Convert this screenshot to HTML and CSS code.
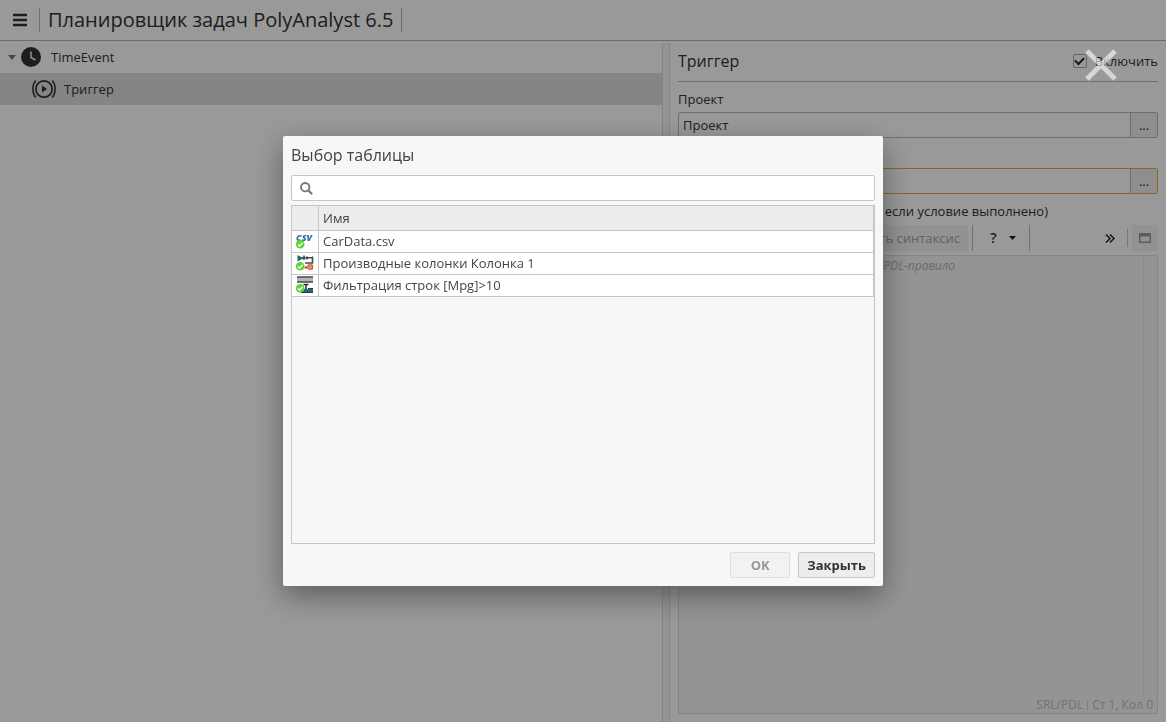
FILE: index.html
```html
<!DOCTYPE html>
<html lang="ru">
<head>
<meta charset="utf-8">
<title>Планировщик задач PolyAnalyst 6.5</title>
<link rel="stylesheet" href="styles.css">
</head>
<body>
<div class="app">
  <header class="topbar">
    <button class="menu" aria-label="Меню"><svg width="16" height="14" viewBox="0 0 16 14"><path d="M1 2h14M1 7h14M1 12h14" stroke="#333" stroke-width="2.4"/></svg></button>
    <h1 class="title">Планировщик задач PolyAnalyst 6.5</h1>
  </header>
  <div class="columns">
    <nav class="tree">
      <div class="node">
        <svg class="twist" width="8" height="5" viewBox="0 0 8 5"><path d="M0 0h8L4 5z" fill="#777"/></svg>
        <svg width="20" height="20" viewBox="0 0 20 20"><circle cx="10" cy="10" r="10" fill="#333"/><path d="M10 4.500V10.500L14.500 13" fill="none" stroke="#f5f5f5" stroke-width="1.500"/></svg>
        <span class="node-name">TimeEvent</span>
      </div>
      <div class="node child">
        <svg width="24" height="20" viewBox="0 0 24 20"><g fill="none" stroke="#333"><circle cx="12" cy="10" r="8.200" stroke-width="1.800"/><path d="M3.600 1.500C0 6 0 14 3.600 18.500M20.400 1.500C24 6 24 14 20.400 18.500" stroke-width="1.500"/></g><path d="M10 6.500v7l5-3.500z" fill="#333"/></svg>
        <span class="node-name">Триггер</span>
      </div>
    </nav>
    <div class="splitter"></div>
    <section class="panel">
      <div class="panel-head">
        <h2 class="panel-title">Триггер</h2>
        <label class="enable"><input type="checkbox" class="check" checked>Включить</label>
      </div>
      <label class="label" for="project">Проект</label>
      <div class="picker">
        <input id="project" class="field" value="Проект">
        <button class="more">...</button>
      </div>
      <label class="label" for="table">Таблица</label>
      <div class="picker invalid">
        <input id="table" class="field">
        <button class="more">...</button>
      </div>
      <label class="label condition" for="rule">если условие выполнено)</label>
      <div class="toolbar">
        <button class="tool syntax" disabled>Проверить синтаксис</button>
        <button class="tool help">? <svg width="7" height="4" viewBox="0 0 7 4"><path d="M0 0h7L3.500 4z" fill="#222"/></svg></button>
        <button class="tool expand" aria-label="Ещё"><svg width="10" height="9" viewBox="0 0 10 9"><path d="M1 .5l4 4-4 4M5 .5l4 4-4 4" fill="none" stroke="#222" stroke-width="1.500"/></svg></button>
        <span class="bar"></span>
        <button class="tool window" aria-label="Окно"><svg width="12" height="10" viewBox="0 0 12 10"><path d="M.75.75h10.500v8.500H.75z" fill="none" stroke="#999" stroke-width="1.500"/><path d="M0 0h12v3.500H0z" fill="#999"/></svg></button>
      </div>
      <div class="editor">
        <div class="editor-main">
          <textarea id="rule" class="code" placeholder="SRL/PDL-правило"></textarea>
          <div class="ruler"></div>
        </div>
        <div class="status"><span>SRL/PDL</span><span class="tick"></span><span>Ст 1, Кол 0</span></div>
      </div>
    </section>
  </div>
</div>
<div class="overlay">
  <button class="dismiss" aria-label="Закрыть окно"><svg width="32" height="32" viewBox="0 0 32 32"><path d="M2 2l28 28M30 2L2 30" stroke="#fff" stroke-opacity=".6" stroke-width="5"/></svg></button>
  <div class="dialog" role="dialog" aria-labelledby="dialog-title">
    <h2 class="dialog-title" id="dialog-title">Выбор таблицы</h2>
    <label class="search">
      <svg width="13" height="13" viewBox="0 0 13 13"><circle cx="5.200" cy="5.200" r="4.200" fill="none" stroke="#777" stroke-width="1.900"/><path d="M8.500 8.500L11.500 11.500" stroke="#777" stroke-width="2.200" stroke-linecap="round"/></svg>
      <input class="search-input" type="text" aria-label="Поиск">
    </label>
    <div class="list">
      <table class="grid">
        <thead><tr><th class="icon-cell"></th><th>Имя</th></tr></thead>
        <tbody>
          <tr><td class="icon-cell"><svg width="18" height="17" viewBox="0 0 18 17"><text x="0" y="9" class="csv">CSV</text><circle cx="4.200" cy="12.300" r="4.300" fill="#5fd63a"/><path d="M2 12.500l1.600 1.600 3-3.400" fill="none" stroke="#fff" stroke-width="1.300"/></svg></td><td>CarData.csv</td></tr>
          <tr><td class="icon-cell"><svg width="18" height="17" viewBox="0 0 18 17"><path d="M1.500 1v6.500l6-3.200z" fill="#1d6878"/><path d="M6 3.800h11M8 1.500v4.500M11 2.500v3M16.500 2.500v6.500H9" fill="none" stroke="#424a4e" stroke-width="1.600"/><circle cx="14" cy="13" r="2.700" fill="#f5836b" stroke="#b94e3c" stroke-width=".7"/><circle cx="9.800" cy="13.500" r="1.300" fill="#b94e3c"/><path d="M16.500 10.500v5" stroke="#b94e3c" stroke-width=".8"/><circle cx="4.200" cy="12.300" r="4.300" fill="#5fd63a"/><path d="M2 12.500l1.600 1.600 3-3.400" fill="none" stroke="#fff" stroke-width="1.300"/></svg></td><td>Производные колонки Колонка 1</td></tr>
          <tr><td class="icon-cell"><svg width="18" height="17" viewBox="0 0 18 17"><path d="M1 1h16v5H1z" fill="#b5b5b5"/><path d="M1 1h16M1 6h16" stroke="#4a4a4a" stroke-width="1.300"/><path d="M7 13h10v3.500H4z" fill="#1d7080"/><path d="M12 12.700h5M5 16.300h12" stroke="#333b40" stroke-width="1.200"/><path d="M7.500 8.500h5M10 8.500V13" stroke="#333" stroke-width="1.600"/><circle cx="4.200" cy="12.300" r="4.300" fill="#5fd63a"/><path d="M2 12.500l1.600 1.600 3-3.400" fill="none" stroke="#fff" stroke-width="1.300"/></svg></td><td>Фильтрация строк [Mpg]&gt;10</td></tr>
        </tbody>
      </table>
    </div>
    <div class="actions">
      <button class="btn" disabled>OK</button>
      <button class="btn">Закрыть</button>
    </div>
  </div>
</div>
</body>
</html>
```

FILE: styles.css
```css
* { box-sizing: border-box; }
body { margin: 0; font: 13px/18px "Open Sans", "Noto Sans", sans-serif; color: #333; background: #fff; }
h1, h2 { margin: 0; font-weight: 400; }
button, input, textarea { font: inherit; color: inherit; margin: 0; padding: 0; border: 0; background: none; border-radius: 0; }
svg { display: block; flex: none; }

.app { display: flex; flex-direction: column; height: 100vh; }
.topbar { display: flex; align-items: center; height: 41px; border-bottom: 1px solid #b4b4b4; }
.menu { width: 39px; display: flex; justify-content: center; }
.title { font-size: 20px; line-height: 24px; padding: 0 8px; border: solid #b9b9b9; border-width: 0 1px; }
.columns { flex: 1; min-height: 0; display: grid; grid-template-columns: 662fr 8px 496fr; }

.node { display: flex; align-items: center; height: 32px; padding-left: 8px; }
.node .twist { margin-right: 5px; }
.node-name { margin-left: 10px; }
.node.child { padding-left: 32px; background: #dedede; }
.node.child .node-name { margin-left: 8px; }
.splitter { border: solid #dedede; border-width: 0 1px; background: #f7f7f7; margin-top: 2px; }

.panel { display: flex; flex-direction: column; padding: 0 8px; min-width: 0; }
.panel-head { display: flex; justify-content: space-between; align-items: center; flex: none; height: 41px; border-bottom: 1px solid #b9b9b9; }
.panel-title { font-size: 16px; line-height: 22px; }
.enable { display: flex; align-items: center; gap: 8px; }
.check { appearance: none; width: 14px; height: 14px; border: 1px solid #aaa; border-radius: 2px; display: grid; place-items: center; }
.check:checked::before { content: ""; width: 7px; height: 4px; border: solid #222; border-width: 0 0 2px 2px; transform: rotate(-45deg); margin-bottom: 2px; }
.label { margin-top: 8px; line-height: 18px; padding-bottom: 4px; }
.picker { display: flex; flex: none; height: 26px; border: 1px solid #b9b9b9; border-radius: 2px; }
.picker.invalid { border-color: #e8a840; }
.field { flex: 1; min-width: 0; padding: 0 4px; outline: 0; }
.more { width: 27px; background: #ededed; border-left: 1px solid #b9b9b9; }
.condition { text-align: right; padding: 0 110px 3px 0; }

.toolbar { display: flex; align-items: center; justify-content: flex-end; flex: none; height: 30px; }
.tool { height: 26px; display: flex; align-items: center; justify-content: center; border-radius: 2px; }
.syntax { background: #f4f4f4; color: #a4a4a4; padding: 0 8px; margin-right: 4px; }
.help { width: 58px; gap: 12px; padding-left: 4px; border: solid #b9b9b9; border-width: 0 1px; border-radius: 0; font-weight: 600; font-size: 14px; }
.expand { width: 26px; margin-left: 67px; }
.bar { width: 1px; height: 18px; margin: 0 4px; background: #c6c6c6; }
.window { width: 26px; background: #f4f4f4; }

.editor { flex: 1; min-height: 0; display: flex; flex-direction: column; margin: 2px 0 8px; border: 1px solid #dedede; border-radius: 2px; background: #f7f7f7; }
.editor-main { flex: 1; display: flex; min-height: 0; }
.code { flex: 1; resize: none; outline: 0; padding: 1px 188px 0 0; text-align: right; }
.code::placeholder { color: #b4b4b4; opacity: 1; font-style: italic; font-size: 12px; }
.ruler { width: 14px; border-left: 1px solid #e4e4e4; }
.status { display: flex; justify-content: flex-end; align-items: center; gap: 4px; height: 16px; padding-right: 4px; color: #c0c0c0; font-size: 12px; }
.tick { width: 1px; height: 9px; background: #d0d0d0; }

.overlay { position: fixed; inset: 0; display: grid; place-items: center; background: rgba(0, 0, 0, .4); }
.dismiss { position: absolute; top: 49px; right: 49px; }
.dialog { width: 600px; height: 450px; display: flex; flex-direction: column; padding: 8px; background: #f7f7f7; border-radius: 2px; box-shadow: 0 10px 30px rgba(0, 0, 0, .4); color: #444; }
.dialog-title { font-size: 16px; line-height: 22px; padding-bottom: 9px; }
.search { display: flex; align-items: center; gap: 8px; height: 26px; padding-left: 8px; background: #fff; border: 1px solid #c6c6c6; border-radius: 2px; }
.search-input { flex: 1; outline: 0; }
.list { flex: 1; margin: 4px 0 8px; border: 1px solid #c6c6c6; }
.grid { width: 100%; border-collapse: separate; border-spacing: 0; border-right: 1px solid #c6c6c6; }
.grid th, .grid td { padding: 0 4px; height: 22px; border-bottom: 1px solid #c6c6c6; text-align: left; font-weight: 400; line-height: 18px; }
.grid th { height: 25px; background: #ececec; }
.grid td { background: #fff; padding-bottom: 2px; }
.grid .icon-cell { width: 27px; border-right: 1px solid #c6c6c6; }
.csv { font: italic 800 9px "Open Sans", sans-serif; fill: #2d73a5; }
.actions { display: flex; justify-content: flex-end; gap: 8px; }
.btn { min-width: 60px; height: 26px; padding: 0 8px; border: 1px solid #c6c6c6; border-radius: 2px; background: #ededed; color: #333; font-weight: 700; }
.btn:disabled { color: #999; background: #f2f2f2; border-color: #dedede; }
```
